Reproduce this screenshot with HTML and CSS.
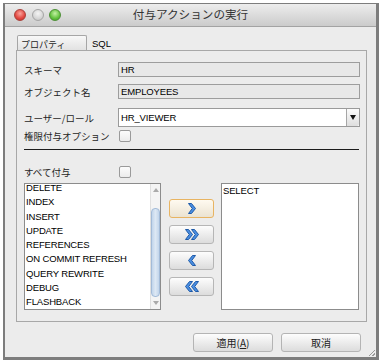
FILE: index.html
```html
<!DOCTYPE html>
<html lang="ja">
<head>
  <meta charset="UTF-8" />
  <title>付与アクションの実行</title>
  <link rel="stylesheet" href="styles.css">
</head>
<body>

  <div class="window">
    <div class="titlebar">
      <div class="lights">
        <span class="light red"></span>
        <span class="light idle"></span>
        <span class="light green"></span>
      </div>
      <div class="title">付与アクションの実行</div>
      <div></div>
    </div>

    <div class="content">
      <div class="tabs">
        <div class="tab active">プロパティ</div>
        <div class="tab plain">SQL</div>
      </div>

      <div class="panel">
        <div class="row r-schema">
          <label>スキーマ</label>
          <div class="field ro">HR</div>
        </div>
        <div class="row r-object">
          <label>オブジェクト名</label>
          <div class="field ro">EMPLOYEES</div>
        </div>
        <div class="row r-user">
          <label>ユーザー/ロール</label>
          <div class="combo">
            <span class="combo-text">HR_VIEWER</span>
            <span class="combo-btn"><span class="tri-down"></span></span>
          </div>
        </div>
        <div class="row r-option">
          <label>権限付与オプション</label>
          <span class="check"></span>
        </div>
        <div class="sep"></div>
        <div class="row r-all">
          <label>すべて付与</label>
          <span class="check"></span>
        </div>

        <div class="lists">
          <div class="list left">
            <ul class="items scrolled">
              <li>DELETE</li>
              <li>INDEX</li>
              <li>INSERT</li>
              <li>UPDATE</li>
              <li>REFERENCES</li>
              <li>ON COMMIT REFRESH</li>
              <li>QUERY REWRITE</li>
              <li>DEBUG</li>
              <li>FLASHBACK</li>
            </ul>
            <div class="scrollbar">
              <div class="sb-arrow"><span class="tri-up"></span></div>
              <div class="sb-track"><div class="sb-thumb"></div></div>
              <div class="sb-arrow"><span class="tri-dn"></span></div>
            </div>
          </div>

          <div class="movers">
            <button class="mover focus">
              <svg width="8" height="11" viewBox="0 0 8 11"><polygon class="chev" points="0.5,0.5 3.5,0.5 7.5,5.5 3.5,10.5 0.5,10.5 4.3,5.5"/></svg>
            </button>
            <button class="mover">
              <svg width="14" height="11" viewBox="0 0 14 11"><polygon class="chev" points="0.5,0.5 3.5,0.5 7.5,5.5 3.5,10.5 0.5,10.5 4.3,5.5"/><polygon class="chev" points="6.5,0.5 9.5,0.5 13.5,5.5 9.5,10.5 6.5,10.5 10.3,5.5"/></svg>
            </button>
            <button class="mover">
              <svg width="8" height="11" viewBox="0 0 8 11"><polygon class="chev" points="7.5,0.5 4.5,0.5 0.5,5.5 4.5,10.5 7.5,10.5 3.7,5.5"/></svg>
            </button>
            <button class="mover">
              <svg width="14" height="11" viewBox="0 0 14 11"><polygon class="chev" points="13.5,0.5 10.5,0.5 6.5,5.5 10.5,10.5 13.5,10.5 9.7,5.5"/><polygon class="chev" points="7.5,0.5 4.5,0.5 0.5,5.5 4.5,10.5 7.5,10.5 3.7,5.5"/></svg>
            </button>
          </div>

          <div class="list right">
            <ul class="items">
              <li>SELECT</li>
            </ul>
          </div>
        </div>
      </div>

      <div class="footer">
        <button class="btn">適用(<u>A</u>)</button>
        <button class="btn">取消</button>
      </div>
    </div>

    <div class="grip"></div>
  </div>

</body>
</html>
```

FILE: styles.css
```css
/* Baseline */
* {
  margin: 0;
  padding: 0;
  box-sizing: border-box;
}
body {
  background: #fff;
  font-family: "Noto Sans CJK JP", sans-serif;
  color: #1e1e1e;
}

/* Window frame */
.window {
  margin: 3px;
  width: 376px;
  height: 357px;
  border-style: solid;
  border-color: #7d7d7d;
  border-width: 1px 3px 3px 2px;
  background: #ececec;
  display: flex;
  flex-direction: column;
  position: relative;
}

.titlebar {
  height: 23px;
  border-bottom: 1px solid #a3a3a3;
  background: linear-gradient(#ededed, #cbcbcb);
  display: grid;
  grid-template-columns: 1fr auto 1fr;
  align-items: center;
}
.lights {
  display: flex;
  gap: 5.5px;
  padding-left: 9px;
}
.light {
  width: 12px;
  height: 12px;
  border-radius: 50%;
}
.light.red {
  background: radial-gradient(circle at 50% 35%, #f9a49c, #e2463f 60%, #b8302a);
  border: 1px solid #a9403a;
}
.light.idle {
  background: radial-gradient(circle at 50% 35%, #f4f4f4, #d6d6d6 60%, #bdbdbd);
  border: 1px solid #a5a5a5;
}
.light.green {
  background: radial-gradient(circle at 50% 35%, #c4f0a4, #62c23e 60%, #3f9a27);
  border: 1px solid #4c8f35;
}
.title {
  font-size: 11.6px;
  line-height: 1;
  color: #333;
}

/* Dialog body */
.content {
  flex: 1;
  padding: 8px 9px 0 11px;
  display: flex;
  flex-direction: column;
}

.tabs {
  height: 15px;
  display: flex;
}
.tab {
  font-size: 9px;
  line-height: 12px;
  padding-top: 3px;
}
.tab.active {
  width: 70px;
  margin-left: 1px;
  padding-left: 3px;
  border: 1px solid #a6a6a6;
  border-bottom: none;
  border-radius: 2px 2px 0 0;
  background: linear-gradient(#f8f8f8, #e2e2e2);
}
.tab.plain {
  margin-left: 5px;
  font-family: "Liberation Sans", sans-serif;
  font-size: 9.5px;
  color: #000;
}

.panel {
  height: 272px;
  border: 1px solid #a8a8a8;
  padding: 11px 5px 0 7px;
}

.row {
  display: flex;
  align-items: center;
}
.row label {
  width: 94px;
  font-size: 9.5px;
  line-height: 12px;
  white-space: nowrap;
}
.r-object { margin-top: 7px; }
.r-user { margin-top: 9px; }
.r-option { margin-top: 3px; }
.r-all { margin-top: 16px; }

.field {
  width: 242px;
  height: 15px;
  border: 1px solid #9d9d9d;
  background: #e8e8e8;
  padding-left: 2px;
  font-family: "Liberation Sans", sans-serif;
  font-size: 9.5px;
  letter-spacing: -0.15px;
  line-height: 13px;
  color: #000;
}

.combo {
  width: 242px;
  height: 19px;
  border: 1px solid #9a9a9a;
  background: #fff;
  display: flex;
  align-items: center;
}
.combo-text {
  flex: 1;
  padding-left: 2px;
  font-family: "Liberation Sans", sans-serif;
  font-size: 9.5px;
  letter-spacing: -0.15px;
  color: #000;
}
.combo-btn {
  width: 13px;
  height: 17px;
  border-left: 1px solid #a6a6a6;
  border-radius: 0 2px 2px 0;
  background: linear-gradient(#fbfbfb, #dedede);
  display: flex;
  align-items: center;
  justify-content: center;
}
.tri-down {
  border-left: 3.5px solid transparent;
  border-right: 3.5px solid transparent;
  border-top: 5px solid #111;
}

.check {
  width: 12px;
  height: 12px;
  margin-left: 1px;
  border: 1px solid #9a9a9a;
  border-radius: 2px;
  background: linear-gradient(#fcfcfc, #ececec);
}

.sep {
  margin-top: 7px;
  width: 335px;
  border-top: 1px solid #1c1c1c;
}

/* Privilege lists */
.lists {
  margin-top: 5px;
  height: 127px;
  display: flex;
}
.list {
  border: 1px solid #8c8c8c;
  background: #fff;
  overflow: hidden;
}
.list.left {
  width: 137px;
  display: flex;
}
.list.right {
  width: 138px;
  margin-left: 7px;
}
.items {
  flex: 1;
  list-style: none;
  font-family: "Liberation Sans", sans-serif;
  font-size: 9.5px;
  letter-spacing: -0.15px;
  line-height: 14.3px;
  color: #000;
  padding-left: 1px;
}
.items.scrolled {
  margin-top: -3px;
}

.scrollbar {
  width: 10px;
  background: #f4f4f4;
  border-left: 1px solid #e0e0e0;
  display: flex;
  flex-direction: column;
}
.sb-arrow {
  height: 12px;
  display: flex;
  align-items: center;
  justify-content: center;
}
.tri-up {
  border-left: 3px solid transparent;
  border-right: 3px solid transparent;
  border-bottom: 4px solid #aaa;
}
.tri-dn {
  border-left: 3px solid transparent;
  border-right: 3px solid transparent;
  border-top: 4px solid #aaa;
}
.sb-track {
  flex: 1;
  padding-top: 12px;
}
.sb-thumb {
  height: 89px;
  border: 1px solid #a3bbd8;
  border-radius: 4px;
  background: linear-gradient(to right, #c2d5eb, #dde8f4, #c2d5eb);
}

.movers {
  width: 45px;
  margin-left: 8px;
  padding-top: 16px;
  display: flex;
  flex-direction: column;
  gap: 7px;
}
.mover {
  height: 19px;
  border: 1px solid #b6b6b6;
  border-radius: 3px;
  background: linear-gradient(#fdfdfd, #dcdcdc);
  display: flex;
  align-items: center;
  justify-content: center;
}
.mover.focus {
  border-color: #e8b462;
  background: linear-gradient(#fffaf0, #ebe3d2);
}
.chev {
  fill: #4b8fe2;
  stroke: #1f5aa8;
  stroke-width: 1;
  stroke-linejoin: round;
}

/* Bottom buttons */
.footer {
  margin-top: 11px;
  padding-right: 6px;
  display: flex;
  justify-content: flex-end;
  gap: 8px;
}
.btn {
  width: 80px;
  height: 19px;
  border: 1px solid #b4b4b4;
  border-radius: 3px;
  background: linear-gradient(#fdfdfd, #dcdcdc);
  font-family: "Noto Sans CJK JP", sans-serif;
  font-size: 10px;
  color: #222;
}

.grip {
  position: absolute;
  right: 1px;
  bottom: 1px;
  width: 8px;
  height: 8px;
  background: repeating-linear-gradient(135deg, transparent 0 1.5px, #9a9a9a 1.5px 2.5px);
  clip-path: polygon(100% 0, 100% 100%, 0 100%);
}
```
